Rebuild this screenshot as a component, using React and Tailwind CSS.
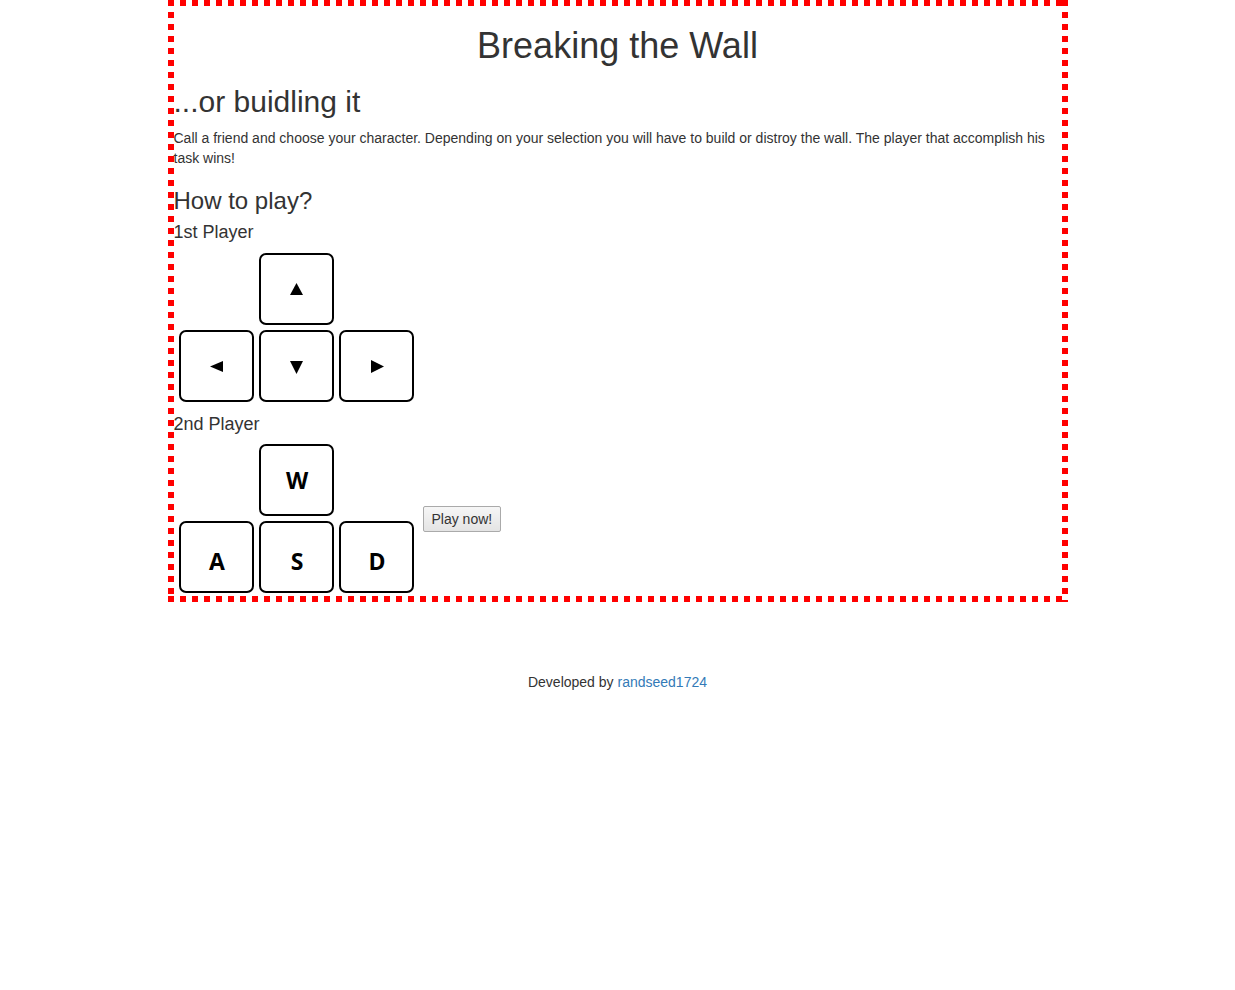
import React from "react";

const Key = ({ children, low }) => (
  <div
    className={`w-[75px] h-[72px] border-2 border-black rounded-[7px] bg-white flex items-center justify-center ${low ? "pt-[8px]" : ""}`}
  >
    {children}
  </div>
);

const Tri = ({ dir }) => {
  const pts = {
    up: "6.5,0 13,12 0,12",
    down: "0,0 13,0 6.5,13",
    left: "13,0 13,11 0,5.5",
    right: "0,0 13,6.5 0,13",
  }[dir];
  const dims = {
    up: [13, 12],
    down: [13, 13],
    left: [13, 11],
    right: [13, 13],
  }[dir];
  return (
    <svg width={dims[0]} height={dims[1]} viewBox={`0 0 ${dims[0]} ${dims[1]}`}>
      <polygon points={pts} fill="#000" />
    </svg>
  );
};

const Letter = ({ c }) => (
  <span
    className="ml-[2px] text-[23px] font-bold text-black leading-none"
    style={{ fontFamily: '"Open Sans", sans-serif' }}
  >
    {c}
  </span>
);

export default function App() {
  return (
    <div className="w-full bg-white text-[#333]" style={{ fontFamily: '"Liberation Sans", Arial, sans-serif' }}>
      <div className="w-[900px] mx-auto border-[6px] border-transparent pb-[3px] bg-no-repeat bg-origin-border [background-image:repeating-linear-gradient(90deg,#ff0000_0_6px,transparent_6px_12px),repeating-linear-gradient(90deg,#ff0000_0_6px,transparent_6px_12px),repeating-linear-gradient(180deg,#ff0000_0_6px,transparent_6px_12px),repeating-linear-gradient(180deg,#ff0000_0_6px,transparent_6px_12px)] [background-size:100%_6px,100%_6px,6px_100%,6px_100%] [background-position:0_0,0_100%,0_0,100%_0]">
        <h1 className="mt-[20px] text-[36px] leading-[40px] text-center font-normal">Breaking the Wall</h1>
        <h2 className="mt-[19px] text-[30px] leading-[33px] font-normal">...or buidling it</h2>
        <p className="mt-[10px] text-[14px] leading-[20px]">
          Call a friend and choose your character. Depending on your selection you will have to build or distroy the wall. The player that accomplish his task wins!
        </p>
        <h3 className="mt-[20px] text-[24px] leading-[26px] font-normal">How to play?</h3>
        <div className="mt-[8px] text-[18px] leading-[20px]">1st Player</div>
        <div className="mt-[11px] ml-[5px] grid grid-cols-[75px_75px_75px] gap-x-[5px] gap-y-[5px] w-max">
          <div />
          <Key><Tri dir="up" /></Key>
          <div />
          <Key><Tri dir="left" /></Key>
          <Key><span className="mt-[3px] flex"><Tri dir="down" /></span></Key>
          <Key><span className="ml-[3px] flex"><Tri dir="right" /></span></Key>
        </div>
        <div className="mt-[12px] text-[18px] leading-[20px]">2nd Player</div>
        <div className="mt-[10px] ml-[5px] flex items-center">
          <div className="grid grid-cols-[75px_75px_75px] gap-x-[5px] gap-y-[5px] w-max">
            <div />
            <Key><Letter c="W" /></Key>
            <div />
            <Key low><Letter c="A" /></Key>
            <Key low><Letter c="S" /></Key>
            <Key low><Letter c="D" /></Key>
          </div>
          <button className="ml-[9px] h-[26px] px-[8px] text-[14px] text-[#333] border border-[#aaaaaa] rounded-[2px] bg-gradient-to-b from-[#f6f6f6] to-[#e4e4e4] leading-[20px]">
            Play now!
          </button>
        </div>
      </div>
      <div className="mt-[70px] text-center text-[14px] leading-[20px]">
        Developed by <a href="#" className="text-[#337ab7]">randseed1724</a>
      </div>
    </div>
  );
}
